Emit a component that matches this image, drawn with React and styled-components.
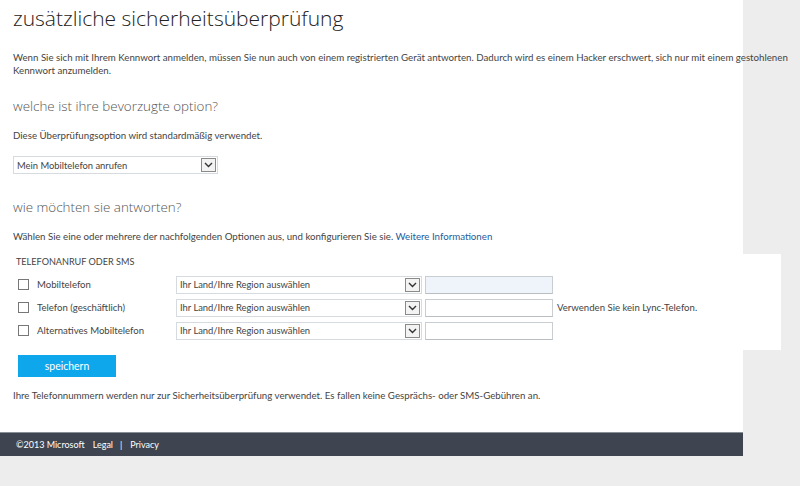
import React from 'react'
import styled, { createGlobalStyle } from 'styled-components'

const Global = createGlobalStyle`
  html, body {
    margin: 0;
    padding: 0;
    background: #ededed;
  }
  body {
    font-family: Lato, "Open Sans", sans-serif;
    color: #444;
    overflow: hidden;
  }
`

function Arrow() {
  return (
    <ArrowBox>
      <svg width="9" height="6" viewBox="0 0 9 6">
        <path d="M1 1 L4.5 4.5 L8 1" fill="none" stroke="#333" strokeWidth="1.4" />
      </svg>
    </ArrowBox>
  )
}

function Select({ label, width, top }) {
  return (
    <SelectBox $width={width} $top={top}>
      <span>{label}</span>
      <Arrow />
    </SelectBox>
  )
}

const rows = [
  { label: 'Mobiltelefon', focus: true },
  { label: 'Telefon (geschäftlich)', hint: 'Verwenden Sie kein Lync-Telefon.' },
  { label: 'Alternatives Mobiltelefon' },
]

function App() {
  return (
    <>
      <Global />
      <Page>
        <Content>
          <Title>zusätzliche sicherheitsüberprüfung</Title>
          <Intro>
            Wenn Sie sich mit Ihrem Kennwort anmelden, müssen Sie nun auch von einem registrierten Gerät antworten. Dadurch wird es einem Hacker erschwert, sich nur mit einem gestohlenen Kennwort anzumelden.
          </Intro>
          <Heading $top={18}>welche ist ihre bevorzugte option?</Heading>
          <Text $top={11}>Diese Überprüfungsoption wird standardmäßig verwendet.</Text>
          <Select label="Mein Mobiltelefon anrufen" width={205} top={14} />
          <Heading $top={22}>wie möchten sie antworten?</Heading>
          <Text $top={11}>
            Wählen Sie eine oder mehrere der nachfolgenden Optionen aus, und konfigurieren Sie sie.{' '}
            <Link href="#">Weitere Informationen</Link>
          </Text>
        </Content>
        <Options>
          <Caption>TELEFONANRUF ODER SMS</Caption>
          {rows.map((r) => (
            <Row key={r.label}>
              <Check />
              <Label>{r.label}</Label>
              <Select label="Ihr Land/Ihre Region auswählen" width={246} top={0} />
              <Input $focus={r.focus} />
              {r.hint && <Hint>{r.hint}</Hint>}
            </Row>
          ))}
        </Options>
        <Content>
          <Button>speichern</Button>
          <Note>
            Ihre Telefonnummern werden nur zur Sicherheitsüberprüfung verwendet. Es fallen keine Gesprächs- oder SMS-Gebühren an.
          </Note>
        </Content>
        <Footer>
          <span>©2013 Microsoft</span>
          <FootLink $gap={8}>Legal</FootLink>
          <FootLink $gap={7}>|</FootLink>
          <FootLink $gap={8}>Privacy</FootLink>
        </Footer>
      </Page>
    </>
  )
}

export default App

const Page = styled.div`
  width: 743px;
  background: #fff;
`

const Content = styled.div`
  padding: 0 0 0 13px;
  background: #fff;
`

const Title = styled.h1`
  margin: 0;
  padding-top: 3px;
  font-family: "Open Sans", sans-serif;
  font-size: 21px;
  font-weight: 300;
  color: #222;
  line-height: 30px;
`

const Intro = styled.p`
  width: 785px;
  margin: 18px 0 0;
  font-size: 9.7px;
  line-height: 13px;
  color: #444;
`

const Heading = styled.h2`
  margin: ${(p) => p.$top}px 0 0;
  font-family: "Open Sans", sans-serif;
  font-size: 13.4px;
  font-weight: 300;
  line-height: 22px;
  color: #555;
`

const Text = styled.p`
  margin: ${(p) => p.$top}px 0 0;
  font-size: 9.7px;
  line-height: 14px;
  color: #444;
`

const Link = styled.a`
  color: #1e5c9c;
  text-decoration: none;
`

const SelectBox = styled.div`
  box-sizing: border-box;
  width: ${(p) => p.$width}px;
  height: 18px;
  margin-top: ${(p) => p.$top}px;
  border: 1px solid #d5dbe0;
  display: flex;
  align-items: center;
  justify-content: space-between;
  padding: 0 1px 0 3px;
  font-size: 9.4px;
  color: #444;
  background: #fff;
`

const ArrowBox = styled.div`
  box-sizing: border-box;
  width: 15px;
  height: 14px;
  border: 1px solid #8a8a8a;
  background: #f3f3f3;
  display: flex;
  align-items: center;
  justify-content: center;
`

const Options = styled.div`
  width: 765px;
  margin-top: 11px;
  padding: 1px 0 8px 16px;
  background: #fff;
`

const Caption = styled.div`
  font-size: 9.1px;
  line-height: 14px;
  color: #444;
  margin-bottom: 4px;
`

const Row = styled.div`
  display: flex;
  align-items: center;
  height: 23px;
`

const Check = styled.span`
  box-sizing: border-box;
  width: 11px;
  height: 11px;
  margin: 0 8px 0 2px;
  border: 1px solid #777;
  background: #fff;
`

const Label = styled.span`
  width: 139px;
  font-size: 9.6px;
  color: #444;
`

const Input = styled.div`
  box-sizing: border-box;
  width: 128px;
  height: 18px;
  margin-left: 3px;
  border: 1px solid #c9ced3;
  border-bottom-color: #b9bec3;
  background: ${(p) => (p.$focus ? '#eef4f9' : '#fff')};
`

const Hint = styled.span`
  margin-left: 4px;
  font-size: 9.6px;
  color: #444;
`

const Button = styled.button`
  display: block;
  width: 98px;
  height: 22px;
  margin: 5px 0 0 5px;
  padding: 0;
  border: none;
  background: #0ea7ec;
  color: #fff;
  font-family: inherit;
  font-size: 10.5px;
`

const Note = styled.p`
  margin: 11px 0 0;
  padding-bottom: 30px;
  font-size: 9.7px;
  line-height: 14px;
  color: #444;
`

const Footer = styled.div`
  height: 23px;
  background: #3e4450;
  border-top: 1px solid #8a8e95;
  display: flex;
  align-items: center;
  padding-left: 16px;
  font-size: 9px;
  color: #fff;
`

const FootLink = styled.span`
  margin-left: ${(p) => p.$gap}px;
`
